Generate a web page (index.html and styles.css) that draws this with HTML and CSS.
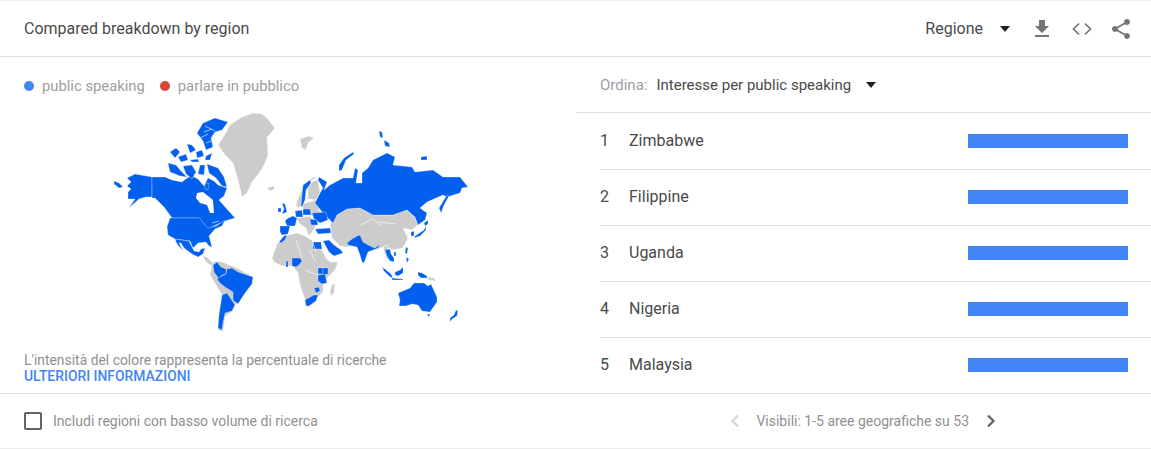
FILE: index.html
```html
<!DOCTYPE html>
<html lang="it">
<head>
<meta charset="utf-8">
<title>Compared breakdown by region</title>
<link rel="stylesheet" href="styles.css">
</head>
<body>
<div class="card">
  <header class="head">
    <div class="title">Compared breakdown by region</div>
    <div class="tools">
      <span class="tool-label">Regione</span>
      <span class="caret caret-head"></span>
      <svg class="icon icon-dl" viewBox="0 0 24 24"><path d="M19 9h-4V3H9v6H5l7 7 7-7zM5 18v2h14v-2H5z"/></svg>
      <svg class="icon icon-code" viewBox="0 0 24 24"><path d="M9 6.500 3.500 12 9 17.500M15 6.500l5.500 5.500-5.500 5.500"/></svg>
      <svg class="icon icon-share" viewBox="0 0 24 24"><path d="M18 16.080c-.76 0-1.440.3-1.960.77L8.910 12.700c.05-.23.09-.46.09-.7s-.04-.47-.09-.7l7.050-4.110c.54.5 1.250.81 2.040.81 1.660 0 3-1.340 3-3s-1.340-3-3-3-3 1.340-3 3c0 .24.04.47.09.7L8.040 9.810C7.500 9.310 6.790 9 6 9c-1.660 0-3 1.340-3 3s1.340 3 3 3c.79 0 1.500-.31 2.040-.81l7.120 4.160c-.05.21-.08.43-.08.65 0 1.610 1.310 2.920 2.920 2.920 1.610 0 2.920-1.310 2.920-2.920s-1.310-2.920-2.920-2.920z"/></svg>
    </div>
  </header>
  <main class="body">
    <section class="left">
      <div class="legend">
        <span class="legend-item"><i class="dot dot-blue"></i>public speaking</span>
        <span class="legend-item"><i class="dot dot-red"></i>parlare in pubblico</span>
      </div>
      <svg class="map" viewBox="110 110 362 230">
        <g class="grey">
          <!-- Greenland, Iceland, Svalbard -->
          <path d="M218,145 L224,136 L230,125 L240,118 L253,113 L262,114 L267,118 L275,128 L270,134 L267,137 L268,155 L264,165 L260,172 L252,182 L247,193 L242,197 L240,188 L238,180 L233,163 L225,155 Z"/>
          <path d="M267,188 L273,186 L275,189 L270,191 Z"/>
          <path d="M300,139 L309,136 L314,138 L308,143 L306,150 L302,148 Z"/>
          <!-- Europe -->
          <path d="M296,205 L299,196 L304,186 L312,178 L318,176 L311,181 L305,190 L302,205 L298,208 Z"/>
          <path d="M308,199 L308,188 L313,181 L318,180 L320,192 L316,200 Z"/>
          <path d="M302,204 L316,200 L320,212 L312,216 L304,212 Z"/>
          <path d="M296,218 L310,216 L316,226 L312,232 L309,236 L306,228 L300,224 Z"/>
          <!-- Asia -->
          <path d="M330,224 L337,215 L347,209 L360,208 L373,215 L393,215 L407,210 L415,217 L418,225 L412,230 L403,228 L408,238 L403,248 L393,250 L385,246 L376,250 L365,245 L355,246 L346,247 L340,246 L332,238 Z"/>
          <path d="M383,247 L388,245 L388,254 L391,262 L386,258 Z"/>
          <path d="M427,277 L434,278 L436,281 L428,280 Z"/>
          <!-- Africa -->
          <path d="M272,258 L277,244 L284,236 L297,233 L305,236 L313,241 L322,250 L326,258 L330,262 L338,262 L335,270 L328,277 L323,283 L323,292 L315,300 L307,307 L305,300 L300,285 L298,273 L293,266 L282,266 L274,262 Z"/>
          <path d="M332,285 L335,284 L334,293 L331,296 L330,291 Z"/>
          <!-- Central and South America -->
          <path d="M202,255 L208,258 L214,264 L212,266 L206,262 Z"/>
          <path d="M212,265 L215,261 L222,262 L232,266 L237,268 L253,277 L252,283 L243,297 L233,307 L232,311 L225,317 L223,332 L218,330 L218,323 L222,295 L210,275 Z"/>
        </g>
        <g class="blue">
          <!-- Alaska -->
          <path d="M127,178 L135,174 L152,177 L152,197 L146,197 L139,199 L129,208 L135,199 L128,199 L128,192 L131,189 L127,186 L131,182 Z"/>
          <path d="M114,181 L119,183 L123,187 L119,188 L114,184 Z"/>
          <!-- Canada -->
          <path d="M152,177 L165,177 L172,180 L182,182 L187,178 L192,176 L198,179 L204,186 L208,178 L214,181 L218,185 L227,188 L224,196 L219,200 L226,208 L235,218 L228,220 L218,224 L208,229 L202,222 L198,218 L172,218 L164,207 L155,198 L152,198 Z"/>
          <!-- USA -->
          <path d="M170,218 L200,218 L204,224 L208,228 L216,226 L225,220 L222,226 L215,229 L209,236 L212,247 L209,246 L206,242 L198,243 L193,248 L190,241 L175,239 L168,235 L167,227 Z"/>
          <!-- Mexico -->
          <path d="M175,239 L189,241 L193,249 L194,251 L199,252 L201,249 L205,248 L203,254 L198,257 L192,254 L184,248 L181,243 L179,243 L183,251 L177,244 Z"/>
          <!-- Arctic islands -->
          <path d="M197,133 L203,123 L215,118 L228,122 L222,130 L215,132 L211,138 L213,147 L206,150 L203,141 Z"/>
          <path d="M170,152 L176,148 L180,152 L175,158 Z M178,157 L186,154 L188,160 L181,162 Z M187,144 L192,145 L196,150 L190,153 Z M196,152 L202,150 L204,156 L197,158 Z M206,156 L212,153 L210,160 L205,160 Z M190,160 L198,159 L199,162 L192,162 Z"/>
          <path d="M168,163 L176,165 L181,171 L187,177 L180,176 L170,172 Z"/>
          <path d="M183,166 L192,165 L196,172 L192,179 L186,174 Z"/>
          <path d="M200,165 L205,165 L204,175 L198,174 Z"/>
          <path d="M207,164 L218,168 L224,177 L227,187 L222,186 L216,178 L209,173 Z"/>
          <path d="M205,184 L209,183 L208,190 L205,189 Z"/>
          <!-- Russia -->
          <path d="M344,158 L353,152 L354,154 L346,160 L342,170 L339,171 L339,165 Z"/>
          <path d="M315,203 L320,193 L323,188 L318,180 L319,177 L327,182 L324,190 L330,185 L343,178 L353,178 L355,168 L358,170 L356,183 L362,183 L362,173 L368,168 L373,160 L387,153 L395,157 L393,165 L412,167 L415,172 L433,170 L443,177 L460,177 L468,187 L462,188 L460,193 L447,197 L443,195 L427,202 L420,208 L427,213 L425,220 L418,225 L415,217 L407,210 L393,215 L373,215 L360,208 L347,209 L337,215 L333,223 L323,213 Z"/>
          <path d="M447,195 L449,196 L444,205 L441,213 L439,208 Z"/>
          <path d="M379,131 L382,132 L383,138 L380,137 Z M384,140 L389,143 L390,147 L385,146 Z"/>
          <path d="M421,157 L427,156 L427,160 L421,160 Z"/>
          <!-- Europe -->
          <path d="M301,206 L303,185 L310,180 L311,183 L306,190 L305,200 L302,207 Z"/>
          <path d="M282,203 L285,204 L287,212 L282,214 L284,209 Z M278,208 L281,208 L281,212 L278,212 Z"/>
          <path d="M288,218 L293,216 L297,218 L295,226 L287,226 L285,221 Z"/>
          <path d="M295,211 L302,210 L303,217 L296,217 Z"/>
          <path d="M303,209 L310,209 L311,215 L303,215 Z"/>
          <path d="M312,213 L326,212 L328,220 L320,223 L314,219 Z"/>
          <path d="M310,219 L317,220 L318,225 L311,225 Z"/>
          <path d="M280,226 L290,226 L288,234 L282,235 L280,232 Z"/>
          <path d="M315,229 L330,228 L331,233 L318,234 Z"/>
          <!-- Africa, Arabia -->
          <path d="M279,242 L284,236 L287,235 L285,240 L281,243 Z"/>
          <path d="M313,242 L321,242 L322,249 L313,249 Z"/>
          <path d="M323,241 L329,240 L334,245 L341,250 L343,253 L334,256 L329,252 Z"/>
          <path d="M292,258 L300,258 L302,261 L299,265 L296,267 L292,266 Z"/>
          <path d="M286,261 L288,261 L288,267 L286,267 Z"/>
          <path d="M318,268 L323,268 L323,274 L318,274 Z"/>
          <path d="M323,268 L328,268 L328,274 L323,275 Z"/>
          <path d="M318,275 L325,274 L327,283 L322,284 L318,281 Z"/>
          <path d="M314,288 L319,287 L320,291 L316,293 Z"/>
          <path d="M305,300 L314,295 L318,295 L316,301 L309,306 L306,306 Z"/>
          <!-- India, Pakistan -->
          <path d="M347,243 L352,239 L357,236 L360,235 L363,242 L370,246 L375,248 L380,244 L378,248 L373,250 L368,252 L364,263 L362,262 L360,255 L357,247 L348,245 Z"/>
          <!-- South-east Asia, Pacific -->
          <path d="M385,250 L390,249 L391,254 L394,258 L394,262 L390,261 L387,256 Z"/>
          <path d="M394,252 L396,252 L396,256 L394,256 Z"/>
          <path d="M382,267 L385,269 L391,274 L393,278 L390,277 L384,271 Z"/>
          <path d="M395,272 L400,270 L403,267 L403,273 L398,276 L395,275 Z"/>
          <path d="M392,278 L403,279 L403,280 L392,280 Z"/>
          <path d="M406,247 L408,248 L407,254 L405,253 Z M406,257 L409,259 L407,263 Z"/>
          <path d="M418,272 L422,273 L427,276 L427,278 L421,278 L418,275 Z"/>
          <path d="M411,232 L414,231 L414,236 L411,236 Z"/>
          <path d="M415,236 L424,230 L426,226 L426,230 L420,236 L414,238 Z"/>
          <path d="M424,223 L428,220 L428,224 L425,226 Z"/>
          <!-- Oceania -->
          <path d="M398,293 L410,288 L414,283 L424,283 L428,286 L431,284 L437,297 L437,302 L430,312 L422,311 L418,305 L412,304 L406,306 L399,306 L400,300 Z"/>
          <path d="M427,314 L430,314 L429,317 Z"/>
          <path d="M456,310 L458,311 L457,316 L452,319 L450,322 L450,318 L454,315 Z"/>
          <!-- South America -->
          <path d="M213,265 L217,262 L221,267 L226,269 L226,274 L222,275 L219,279 L214,272 Z"/>
          <path d="M217,279 L222,276 L226,274 L227,269 L232,268 L238,272 L253,277 L252,284 L245,293 L238,304 L233,300 L233,292 L225,287 L220,283 Z"/>
          <path d="M222,295 L227,293 L235,305 L232,311 L225,313 L223,323 L222,330 L218,328 L219,315 Z"/>
        </g>
        <g class="cuts">
          <!-- Hudson Bay, Arctic channels, country borders -->
          <path class="cut-fill" d="M197,193 L203,192 L213,200 L214,213 L210,213 L207,205 L200,203 L196,198 Z"/>
          <path d="M205,126 L215,131 M204,132 L212,129 M200,138 L208,134 M206,143 L211,141"/>
          <path d="M212,223 L219,221"/>
          <path d="M360,225 L373,219 L382,226 M378,222 L396,224 M312,240 L316,252 M296,240 L302,258 M310,250 L315,262 M305,270 L318,275"/>
        </g>
      </svg>
      <div class="note">
        <div class="note-text">L'intensità del colore rappresenta la percentuale di ricerche</div>
        <div class="note-link">ULTERIORI INFORMAZIONI</div>
      </div>
    </section>
    <section class="right">
      <div class="sort">
        <span class="sort-label">Ordina:</span>
        <span class="sort-value">Interesse per public speaking</span>
        <span class="caret caret-sort"></span>
      </div>
      <div class="row"><span class="rank">1</span><span class="name">Zimbabwe</span><span class="bar"></span></div>
      <div class="row"><span class="rank">2</span><span class="name">Filippine</span><span class="bar"></span></div>
      <div class="row"><span class="rank">3</span><span class="name">Uganda</span><span class="bar"></span></div>
      <div class="row"><span class="rank">4</span><span class="name">Nigeria</span><span class="bar"></span></div>
      <div class="row"><span class="rank">5</span><span class="name">Malaysia</span><span class="bar"></span></div>
    </section>
  </main>
  <footer class="foot">
    <label class="check"><span class="box"></span>Includi regioni con basso volume di ricerca</label>
    <div class="pager">
      <svg class="chev chev-off" viewBox="0 0 10 14"><path d="M8 1.500 2.500 7 8 12.500"/></svg>
      <span class="pager-text">Visibili: 1-5 aree geografiche su 53</span>
      <svg class="chev chev-on" viewBox="0 0 10 14"><path d="M2 1.500 7.500 7 2 12.500"/></svg>
    </div>
  </footer>
</div>
</body>
</html>
```
FILE: styles.css
```css
* { box-sizing: border-box; }
html, body { margin: 0; background: #fff; }
body { font-family: Roboto, "Liberation Sans", sans-serif; color: #4a4a4a; }
.card {
  width: 1151px;
  height: 449px;
  display: flex;
  flex-direction: column;
  border-top: 1px solid #eee;
  border-bottom: 1px solid #eee;
  overflow: hidden;
}
.head {
  height: 56px;
  flex: none;
  display: flex;
  align-items: center;
  justify-content: space-between;
  padding: 0 8px 0 24px;
  border-bottom: 1px solid #e0e0e0;
}
.title { font-size: 16px; color: #4a4a4a; }
.tools { display: flex; align-items: center; }
.tool-label { font-size: 16px; color: #4a4a4a; }
.caret {
  display: block;
  width: 0;
  height: 0;
  border-left: 5.500px solid transparent;
  border-right: 5.500px solid transparent;
  border-top: 6px solid #212121;
}
.caret-head { margin: 0 20px 0 17px; }
.icon { width: 24px; height: 24px; display: block; fill: #757575; }
.icon-dl { margin-right: 16px; }
.icon-code { margin-right: 15px; fill: none; stroke: #757575; stroke-width: 1.700; }
.icon-share { margin-right: 10px; }
.body { flex: 1; display: flex; min-height: 0; }
.left { width: 576px; flex: none; display: flex; flex-direction: column; padding: 0 24px; }
.legend { display: flex; gap: 15px; margin-top: 21px; height: 16px; align-items: center; font-size: 14.800px; color: #9e9e9e; }
.legend-item { display: flex; align-items: center; gap: 8px; }
.dot { width: 10px; height: 10px; border-radius: 50%; display: block; }
.dot-blue { background: #4285f4; }
.dot-red { background: #db4437; }
.map { display: block; width: 362px; height: 230px; margin: 16px 0 0 86px; flex: none; filter: blur(.35px); }
.grey path { fill: #ccc; stroke: #fff; stroke-width: .4; stroke-linejoin: round; }
.blue path { fill: #0360ef; stroke: #fff; stroke-width: .3; stroke-linejoin: round; }
.cuts path { fill: none; stroke: #fff; stroke-width: .6; }
.cuts .cut-fill { fill: #fff; stroke: none; }
.note { margin-top: 12px; font-size: 13.900px; line-height: 16px; }
.note-text { color: #909090; }
.note-link { color: #4285f4; font-weight: 500; }
.right { flex: 1; display: flex; flex-direction: column; }
.sort { height: 56px; flex: none; display: flex; align-items: center; padding-left: 24px; font-size: 15px; border-bottom: 1px solid #e0e0e0; }
.sort-label { color: #9e9e9e; margin-right: 9px; }
.sort-value { color: #4a4a4a; }
.caret-sort { margin-left: 15px; }
.row { height: 56px; flex: none; display: flex; align-items: center; margin-left: 24px; padding: 0 23px 1px 0; font-size: 16px; color: #4a4a4a; border-bottom: 1px solid #e0e0e0; }
.sort + .row { height: 57px; }
.row:last-child { border-bottom: 0; padding-bottom: 2px; }
.row + .row .rank, .row + .row .name { margin-bottom: 2px; }
.rank { width: 29px; }
.name { flex: 1; }
.bar { width: 160px; height: 14px; background: #4285f4; display: block; }
.foot {
  height: 55px;
  flex: none;
  display: flex;
  align-items: center;
  justify-content: space-between;
  padding: 0 155px 0 24px;
  border-top: 1px solid #e0e0e0;
  font-size: 14px;
  color: #909090;
}
.check { display: flex; align-items: center; }
.box { width: 18px; height: 18px; border: 2px solid #5f6368; border-radius: 2px; display: block; margin-right: 11px; }
.pager { display: flex; align-items: center; }
.chev { width: 10px; height: 14px; display: block; fill: none; stroke-width: 2.200; }
.chev-off { stroke: #d5d5d5; margin-right: 16px; }
.chev-on { stroke: #616161; margin-left: 17px; }
```
